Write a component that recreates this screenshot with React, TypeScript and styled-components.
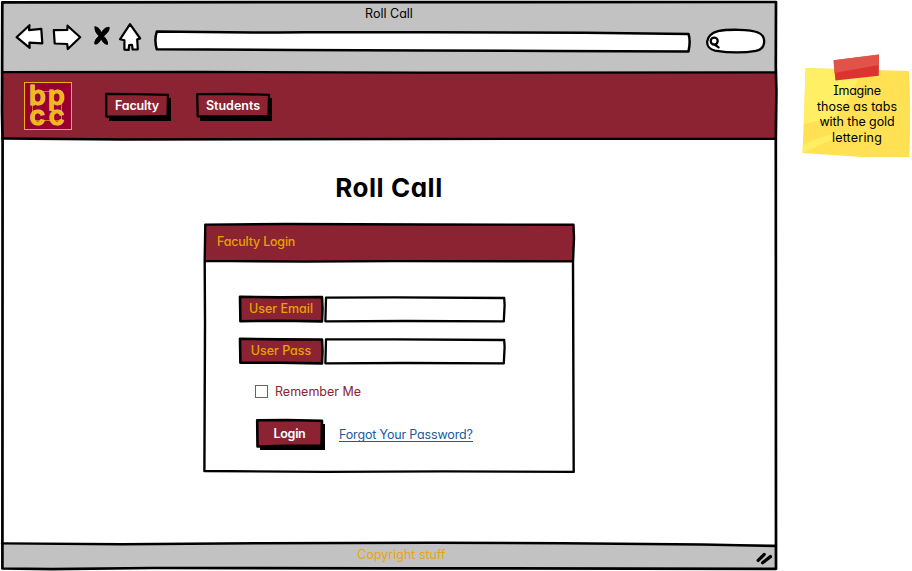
import React from "react";
import styled, { createGlobalStyle } from "styled-components";

const maroon = "#8b2332";
const gold = "#e6a300";
const grey = "#c2c2c2";

const GlobalStyle = createGlobalStyle`
  *, *::before, *::after { box-sizing: border-box; }
  body { margin: 0; background: #fff; overflow: hidden; }
  body, button, input {
    font-family: Inter, "Liberation Sans", sans-serif;
    font-feature-settings: "cv11", "cv08";
    font-size: 13px;
  }
`;

const Page = styled.div`
  display: flex;
  align-items: flex-start;
  width: 912px;
  height: 571px;
  overflow: hidden;
`;

const BrowserWindow = styled.div`
  position: relative;
  display: flex;
  flex-direction: column;
  flex: none;
  width: 774px;
  height: 567px;
  margin: 2px 0 0 2px;
`;

const Ink = styled.svg`
  position: absolute;
  inset: 0;
  width: 100%;
  height: 100%;
  overflow: visible;
  pointer-events: none;
  fill: none;
  stroke: #000;
  stroke-linejoin: round;
  stroke-linecap: round;
`;

function Outline({ d, weight = 2.6 }: { d: string; weight?: number }) {
  return (
    <Ink strokeWidth={weight} aria-hidden="true">
      <path d={d} />
    </Ink>
  );
}

const Label = styled.span<{ $size?: number; $spacing?: number; $color?: string; $weight?: number }>`
  position: relative;
  white-space: nowrap;
  font-size: ${(p) => p.$size ?? 12.5}px;
  letter-spacing: ${(p) => p.$spacing ?? 0}px;
  color: ${(p) => p.$color ?? "#000"};
  font-weight: ${(p) => p.$weight ?? 400};
  line-height: 16px;
`;

const Chrome = styled.header`
  position: relative;
  height: 70px;
  background: ${grey};
`;

const ChromeTitle = styled.div`
  display: flex;
  justify-content: center;
  height: 20px;
  padding: 4px 0 0 0;
`;

const Controls = styled.div`
  display: flex;
  align-items: flex-start;
  padding-left: 12px;
`;

const NavIcon = styled.svg<{ $gap: number }>`
  flex: none;
  height: 30px;
  margin-right: ${(p) => p.$gap}px;
  overflow: visible;
  fill: #fff;
  stroke: #000;
  stroke-width: 2.2;
  stroke-linejoin: round;
  stroke-linecap: round;
`;

const AddressBar = styled.div`
  position: relative;
  width: 534px;
  height: 18px;
  margin: 10px 17px 0 0;
`;

const SearchField = styled.div`
  width: 58px;
  height: 24px;
  margin-top: 7px;
`;

const WhiteInk = styled(Ink)`
  fill: #fff;
`;

const Banner = styled.nav`
  position: relative;
  display: flex;
  align-items: flex-start;
  height: 67px;
  background: ${maroon};
`;

const Logo = styled.svg`
  width: 48px;
  height: 48px;
  margin: 10px 34px 0 22px;
  overflow: visible;
`;

const LogoText = styled.text`
  font-family: Inter, sans-serif;
  font-size: 27px;
  font-weight: 600;
  fill: #f2b90f;
  stroke: #e9c9a2;
  stroke-width: 1;
  paint-order: stroke;
`;

const SketchButton = styled.button<{ $w: number; $h: number }>`
  position: relative;
  display: flex;
  align-items: center;
  justify-content: center;
  width: ${(p) => p.$w}px;
  height: ${(p) => p.$h}px;
  padding: 0;
  border: 0;
  background: ${maroon};
  box-shadow: 3px 4px 0 #000;
`;

const LoginButton = styled(SketchButton)`
  padding-top: 2px;
`;

const Tabs = styled.div`
  display: flex;
  gap: 29px;
  padding-top: 22px;
`;

const Main = styled.main`
  display: flex;
  flex-direction: column;
  align-items: center;
  height: 405px;
`;

const Heading = styled.h1`
  margin: 32px 0 0;
  font-size: 26px;
  line-height: 34px;
  font-weight: 700;
  letter-spacing: 0.55px;
  white-space: nowrap;
`;

const Panel = styled.section`
  position: relative;
  width: 368px;
  height: 248px;
  margin-top: 19px;
`;

const PanelHeader = styled.div`
  position: relative;
  height: 38px;
  padding: 9px 0 0 12px;
  background: ${maroon};
`;

const Form = styled.form`
  display: flex;
  flex-direction: column;
  padding: 35px 0 0 35px;
`;

const Field = styled.label`
  display: flex;
  height: 24px;
  margin-bottom: 18px;
`;

const FieldName = styled.span`
  position: relative;
  display: flex;
  align-items: center;
  justify-content: center;
  width: 82px;
  height: 24px;
  padding-bottom: 1px;
  background: ${maroon};
`;

const FieldBox = styled.span`
  position: relative;
  width: 179px;
  height: 24px;
  margin-left: 3px;
`;

const TextInput = styled.input`
  display: block;
  width: 100%;
  height: 100%;
  padding: 0 6px;
  border: 0;
  outline: 0;
  background: #fff;
`;

const Remember = styled.label`
  display: flex;
  align-items: flex-start;
  gap: 7px;
  height: 16px;
  margin: 4px 0 0 15px;
`;

const CheckBox = styled.input`
  appearance: none;
  width: 13px;
  height: 13px;
  margin: 0;
  border: 1px solid #a04855;
  background: #fff;
`;

const RememberText = styled(Label)`
  line-height: 14px;
`;

const Actions = styled.div`
  display: flex;
  align-items: flex-start;
  gap: 17px;
  margin: 19px 0 0 17px;
`;

const Link = styled.a`
  display: block;
  height: 16px;
  margin-top: 6px;
  border-bottom: 1px solid #205a9b;
  text-decoration: none;
  line-height: 16px;
`;

const Footer = styled.footer`
  position: relative;
  height: 25px;
  display: flex;
  justify-content: center;
  padding: 3px 0 0 25px;
  background: ${grey};
`;

const Note = styled.aside`
  position: relative;
  display: flex;
  flex-direction: column;
  align-items: center;
  width: 110px;
  height: 106px;
  margin: 53px 0 0 26px;
  padding: 30px 0 0 0;
`;

const NotePaper = styled.svg`
  position: absolute;
  inset: 0;
  width: 110px;
  height: 106px;
`;

const NoteLine = styled(Label)`
  line-height: 15.7px;
`;

export default function App() {
  return (
    <Page>
      <GlobalStyle />
      <BrowserWindow>
        <Chrome>
          <ChromeTitle>
            <Label>Roll Call</Label>
          </ChromeTitle>
          <Controls>
            <NavIcon $gap={10} width="28" viewBox="0 0 28 30">
              <path d="M2.6 15.2 L15.5 3.2 L15 8.2 L27.3 6.8 L28.3 21.3 L15.4 20.7 L15.7 25.8 Z" />
            </NavIcon>
            <NavIcon $gap={12} width="28" viewBox="0 0 28 30">
              <path d="M1.8 8.2 L15.3 7.9 L15.5 3.7 L28.2 15.3 L15.8 27 L15.2 22 L2.7 21.5 Z" />
            </NavIcon>
            <NavIcon $gap={9} width="18" viewBox="0 0 18 30">
              <path
                fill="#000"
                strokeWidth="1"
                d="M3 5 C6 4.6 8 7.5 9.4 11 C11 8 13.5 5 17.2 5.4 C17.4 9.4 14 12 11.6 14.2 C13.6 16.3 15.8 19 15.6 22.3 C12.4 22.4 10.6 19.6 9.2 16.8 C7.6 19.6 6 22.6 2.8 22 C2.4 18.4 4.8 16 7.1 13.9 C4.6 11.8 2.5 8.5 3 5 Z"
              />
            </NavIcon>
            <NavIcon $gap={15} width="21" viewBox="0 0 21 30">
              <path d="M11 2.2 L21.2 16.5 L18.2 17.4 L18.8 27.3 L13.7 27.5 L13 22.8 L10.2 23 L9.6 28 L5.4 27.6 L5.4 18.3 L1 17.3 Z" />
            </NavIcon>
            <AddressBar>
              <WhiteInk strokeWidth="2.5" aria-hidden="true">
                <path d="M1.8 -.4 Q70 .8 150 .2 L273 .2 L430 .8 L533.5 1.9 Q535.8 9 533.5 19.5 L400 19 L270 18.4 L140 18.1 L1.8 17.3 Q-1 8 1.8 -.4 Z" />
              </WhiteInk>
            </AddressBar>
            <SearchField>
              <svg width="58" height="24" viewBox="0 0 58 24" fill="#fff" stroke="#000" strokeWidth="2.3" overflow="visible" aria-hidden="true">
                <path d="M12 2.1 C22 .1 44 .1 52 3.5 C60.5 7 60.5 20 50 21.8 C36 24.4 19 23.2 9 21.6 C-2.2 19 -1.6 6 12 2.1 Z" />
                <circle cx="8.2" cy="12.1" r="3.5" />
                <path d="M9.2 16 L12.6 18.4" strokeLinecap="round" />
              </svg>
            </SearchField>
          </Controls>
        </Chrome>

        <Banner>
          <Logo viewBox="0 0 48 48" aria-label="bpcc">
            <rect x=".5" y=".5" width="47" height="47" fill="#99002e" stroke="#f0b010" />
            <rect x="8.5" y="9.5" width="29" height="29" fill="none" stroke="#e66b18" />
            <LogoText x="5 24" y="23">bp</LogoText>
            <LogoText x="5.6 24.8" y="42.8">cc</LogoText>
          </Logo>
          <Tabs>
            <SketchButton type="button" $w={62} $h={23}>
              <Outline weight={2.3} d="M.2 0 L30 .2 L62 .8 L61.6 22 L30 22.7 L.3 22.6 Z" />
              <Label $color="#fff" $weight={600} $spacing={-0.2}>Faculty</Label>
            </SketchButton>
            <SketchButton type="button" $w={72} $h={23}>
              <Outline weight={2.3} d="M.2 .2 L40 0 L72 .8 L71.6 22 L30 22.5 L.7 22.3 Z" />
              <Label $color="#fff" $weight={600}>Students</Label>
            </SketchButton>
          </Tabs>
          <Outline weight={2.3} d="M0 .2 L200 0 L420 .6 L774 .3 M0 66.5 L120 67.5 L400 67 L774 66.8" />
        </Banner>

        <Main>
          <Heading>Roll Call</Heading>
          <Panel>
            <PanelHeader>
              <Label $color={gold} $weight={500} $spacing={-0.2}>Faculty Login</Label>
            </PanelHeader>
            <Outline weight={2.4} d="M.3 .6 L80 0 L220 .5 L368.5 .8 L369 14 L368 38 L368.7 247.9 L240 247.4 L120 247.9 L-.6 247 L0 100 L-.3 36.9 Z M-.3 36.9 L100 37.6 L190 37.1 L368 37.4" />
            <Form>
              <Field>
                <FieldName>
                  <Outline d="M0 -.2 L40 .4 L82 0 L82.5 12 L82 24.4 L40 23.8 L.4 24.2 Z" />
                  <Label $color={gold} $weight={500}>User Email</Label>
                </FieldName>
                <FieldBox>
                  <TextInput aria-label="User Email" />
                  <Outline weight={2.3} d="M1 .6 L70 .4 L179.2 1 L179.6 8 L178.8 24.4 L80 24 L.4 24.3 Z" />
                </FieldBox>
              </Field>
              <Field>
                <FieldName>
                  <Outline d="M0 -.2 L40 .4 L82 .5 L82.5 12 L82 24.4 L40 23.8 L.4 23.7 Z" />
                  <Label $color={gold} $weight={500}>User Pass</Label>
                </FieldName>
                <FieldBox>
                  <TextInput aria-label="User Pass" type="password" />
                  <Outline weight={2.3} d="M1 .4 L70 .3 L179.2 1 L179.6 8 L178.8 24.4 L80 24 L.4 24.3 Z" />
                </FieldBox>
              </Field>
              <Remember>
                <CheckBox type="checkbox" />
                <RememberText $color={maroon}>Remember Me</RememberText>
              </Remember>
              <Actions>
                <LoginButton type="button" $w={65} $h={26}>
                  <Outline d="M.2 .2 L30 0 L65 .7 L64.6 25.7 L30 25.8 L.5 26.5 Z" />
                  <Label $color="#fff" $weight={600} $spacing={-0.3}>Login</Label>
                </LoginButton>
                <Link href="#">
                  <Label $color="#205a9b" $spacing={-0.16}>Forgot Your Password?</Label>
                </Link>
              </Actions>
            </Form>
          </Panel>
        </Main>

        <Footer>
          <Label $color="#eba50c">Copyright stuff</Label>
          <Outline weight={2.4} d="M0 -.6 L120 .3 L260 -.8 L430 -1.2 L560 -.8 L700 .5 L774 2" />
          <Outline weight={3.3} d="M756.2 16.4 L762.2 10.4 M760.6 18.8 L768.4 12.6" />
        </Footer>
        <Outline weight={2.7} d="M.3 .3 L774 0 L773.8 65 L774.4 90 L773.8 138 L774 566.8 L380 566.3 L150 566 L50 567.2 L.4 566.5 L.6 140 L0 110 Z" />
      </BrowserWindow>

      <Note>
        <NotePaper viewBox="0 0 110 106" aria-hidden="true">
          <path d="M3.5 15 L107 18 Q109 55 107.4 104 L60 104 L.5 100 Q2.4 55 3.5 15 Z" fill="#ffe153" />
          <path d="M3.5 15 L59 17 Q50 48 31 65 L2 71 Z" fill="#fff36b" opacity=".75" />
          <path d="M.8 92 Q28 78 50 79 L20 91 L.5 100 Z" fill="#fff36b" opacity=".7" />
          <path d="M31.6 7.2 L77 1.4 L76.8 22.8 L33.4 27.5 Z" fill="#db3430" />
          <path d="M31.6 7.2 L77 1.4 L76.8 12 L32.2 20 Z" fill="#e25a50" opacity=".8" />
        </NotePaper>
        <NoteLine $spacing={-0.3}>Imagine</NoteLine>
        <NoteLine>those as tabs</NoteLine>
        <NoteLine $spacing={-0.1}>with the gold</NoteLine>
        <NoteLine $spacing={0.2}>lettering</NoteLine>
      </Note>
    </Page>
  );
}
